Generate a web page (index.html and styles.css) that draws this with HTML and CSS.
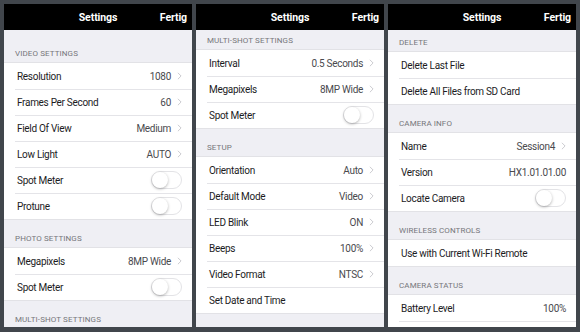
FILE: index.html
```html
<!DOCTYPE html>
<html lang="de">
<head>
  <meta charset="UTF-8">
  <meta name="viewport" content="width=device-width, initial-scale=1.0">
  <title>Settings</title>
  <link rel="stylesheet" href="styles.css">
</head>
<body>
  <div class="screens">

    <!-- screen 1 -->
    <div class="screen">
      <div class="nav-bar">
        <span></span>
        <span class="nav-title">Settings</span>
        <span class="nav-done">Fertig</span>
      </div>
      <div class="table">
        <div class="section-head first">Video Settings</div>
        <div class="group">
          <div class="row"><span class="label">Resolution</span><span class="value">1080</span><svg class="chevron" viewBox="0 0 6 10"><polyline points="1,1 5,5 1,9"/></svg></div>
          <div class="row"><span class="label">Frames Per Second</span><span class="value">60</span><svg class="chevron" viewBox="0 0 6 10"><polyline points="1,1 5,5 1,9"/></svg></div>
          <div class="row"><span class="label">Field Of View</span><span class="value">Medium</span><svg class="chevron" viewBox="0 0 6 10"><polyline points="1,1 5,5 1,9"/></svg></div>
          <div class="row"><span class="label">Low Light</span><span class="value">AUTO</span><svg class="chevron" viewBox="0 0 6 10"><polyline points="1,1 5,5 1,9"/></svg></div>
          <div class="row"><span class="label">Spot Meter</span><span class="switch"></span></div>
          <div class="row"><span class="label">Protune</span><span class="switch"></span></div>
        </div>
        <div class="section-head">Photo Settings</div>
        <div class="group">
          <div class="row"><span class="label">Megapixels</span><span class="value">8MP Wide</span><svg class="chevron" viewBox="0 0 6 10"><polyline points="1,1 5,5 1,9"/></svg></div>
          <div class="row"><span class="label">Spot Meter</span><span class="switch"></span></div>
        </div>
        <div class="section-head">Multi-Shot Settings</div>
      </div>
    </div>

    <!-- screen 2 -->
    <div class="screen">
      <div class="nav-bar">
        <span></span>
        <span class="nav-title">Settings</span>
        <span class="nav-done">Fertig</span>
      </div>
      <div class="table scrolled-more">
        <div class="section-head">Multi-Shot Settings</div>
        <div class="group">
          <div class="row"><span class="label">Interval</span><span class="value">0.5 Seconds</span><svg class="chevron" viewBox="0 0 6 10"><polyline points="1,1 5,5 1,9"/></svg></div>
          <div class="row"><span class="label">Megapixels</span><span class="value">8MP Wide</span><svg class="chevron" viewBox="0 0 6 10"><polyline points="1,1 5,5 1,9"/></svg></div>
          <div class="row"><span class="label">Spot Meter</span><span class="switch"></span></div>
        </div>
        <div class="section-head">Setup</div>
        <div class="group">
          <div class="row"><span class="label">Orientation</span><span class="value">Auto</span><svg class="chevron" viewBox="0 0 6 10"><polyline points="1,1 5,5 1,9"/></svg></div>
          <div class="row"><span class="label">Default Mode</span><span class="value">Video</span><svg class="chevron" viewBox="0 0 6 10"><polyline points="1,1 5,5 1,9"/></svg></div>
          <div class="row"><span class="label">LED Blink</span><span class="value">ON</span><svg class="chevron" viewBox="0 0 6 10"><polyline points="1,1 5,5 1,9"/></svg></div>
          <div class="row"><span class="label">Beeps</span><span class="value">100%</span><svg class="chevron" viewBox="0 0 6 10"><polyline points="1,1 5,5 1,9"/></svg></div>
          <div class="row"><span class="label">Video Format</span><span class="value">NTSC</span><svg class="chevron" viewBox="0 0 6 10"><polyline points="1,1 5,5 1,9"/></svg></div>
          <div class="row"><span class="label">Set Date and Time</span></div>
        </div>
      </div>
    </div>

    <!-- screen 3 -->
    <div class="screen">
      <div class="nav-bar">
        <span></span>
        <span class="nav-title">Settings</span>
        <span class="nav-done">Fertig</span>
      </div>
      <div class="table scrolled">
        <div class="section-head">Delete</div>
        <div class="group">
          <div class="row"><span class="label">Delete Last File</span></div>
          <div class="row"><span class="label">Delete All Files from SD Card</span></div>
        </div>
        <div class="section-head">Camera Info</div>
        <div class="group">
          <div class="row"><span class="label">Name</span><span class="value">Session4</span><svg class="chevron" viewBox="0 0 6 10"><polyline points="1,1 5,5 1,9"/></svg></div>
          <div class="row"><span class="label">Version</span><span class="value">HX1.01.01.00</span></div>
          <div class="row"><span class="label">Locate Camera</span><span class="switch"></span></div>
        </div>
        <div class="section-head">Wireless Controls</div>
        <div class="group">
          <div class="row"><span class="label">Use with Current Wi-Fi Remote</span></div>
        </div>
        <div class="section-head">Camera Status</div>
        <div class="group">
          <div class="row"><span class="label">Battery Level</span><span class="value">100%</span></div>
          <div class="row"></div>
        </div>
      </div>
    </div>

  </div>
</body>
</html>
```

FILE: styles.css
```css
html, body {
  margin: 0;
  height: 100%;
}
body {
  background: #41464c;
  font-family: 'Roboto', 'Liberation Sans', sans-serif;
  color: #1c1c1e;
  overflow: hidden;
}
.screens {
  display: grid;
  grid-template-columns: 1fr 1fr 1fr;
  gap: 4px;
  padding: 4px 4px 5px;
  height: 100%;
  box-sizing: border-box;
}
.screen {
  background: #efeff4;
  overflow: hidden;
  display: flex;
  flex-direction: column;
}
.nav-bar {
  flex: none;
  height: 26px;
  background: #000;
  color: #fff;
  display: grid;
  grid-template-columns: 1fr auto 1fr;
  align-items: center;
  padding: 0 5px;
  font-size: 10.5px;
  font-weight: 700;
  letter-spacing: -0.1px;
}
.nav-done {
  justify-self: end;
}
.table.scrolled {
  margin-top: -7px;
}
.table.scrolled-more {
  margin-top: -9px;
}
.section-head {
  height: 29px;
  box-sizing: border-box;
  display: flex;
  align-items: flex-end;
  padding: 0 11px 5px;
  font-size: 8px;
  letter-spacing: 0.1px;
  text-transform: uppercase;
  color: #76767b;
}
.section-head.first {
  height: 33px;
}
.group {
  background: #fff;
  box-shadow: 0 -1px 0 #e2e2e6, 0 1px 0 #e2e2e6;
}
.row {
  position: relative;
  height: 26px;
  display: flex;
  align-items: center;
  padding: 0 10px 0 13px;
  font-size: 10px;
  letter-spacing: -0.3px;
}
.row + .row::before {
  content: "";
  position: absolute;
  top: 0;
  left: 11px;
  right: 0;
  height: 1px;
  background: #e4e4e8;
}
.label {
  flex: 1;
}
.value {
  color: #4a4a4e;
}
.chevron {
  width: 5px;
  height: 8px;
  margin-left: 6px;
  fill: none;
  stroke: #cacace;
  stroke-width: 1.2;
}
.switch {
  position: relative;
  width: 29px;
  height: 16px;
  border: 1px solid #e3e3e6;
  border-radius: 9px;
  background: #fff;
}
.switch::after {
  content: "";
  position: absolute;
  left: 0;
  top: 0;
  width: 16px;
  height: 16px;
  border-radius: 50%;
  background: #fff;
  box-shadow: 0 1px 3px rgba(0, 0, 0, 0.3);
}
```
